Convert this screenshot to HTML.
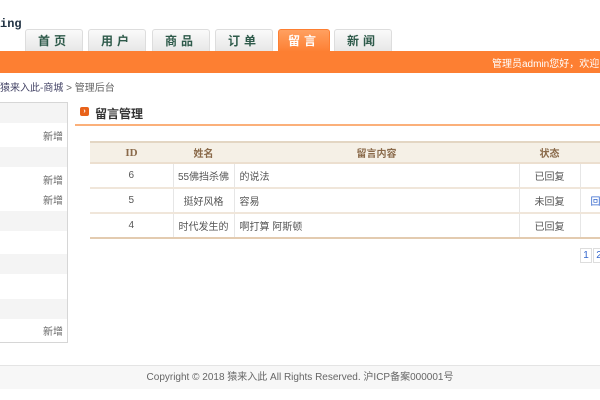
<!DOCTYPE html>
<html><head><meta charset="utf-8"><style>
*{margin:0;padding:0;box-sizing:border-box}
body{width:600px;height:400px;overflow:hidden;background:#fff;font-family:"Liberation Sans","Noto Sans CJK SC",sans-serif;font-size:10px;color:#555;position:relative}
.a{position:absolute}
.logo{left:0;top:17px;font:bold 12px "Liberation Mono",monospace;color:#234;}
.tab{top:29px;height:23px;width:58px;border:1px solid #ddd;border-bottom:none;border-radius:3px 3px 0 0;background:linear-gradient(#fafafa,#e6e6e6);text-align:center;line-height:23px;font-size:12px;font-weight:bold;color:#2e5a4a;letter-spacing:4px}
.tab.on{background:linear-gradient(#ffa060,#fd7f32);color:#fff;border-color:#fd7f32}
.bar{left:0;top:51px;width:600px;height:22px;background:#fd7f32}
.side{left:-2px;top:102px;width:70px;height:241px;border:1px solid #d6d6d6}
.g{position:absolute;left:0;width:68px;background:#f4f4f4}
.xz{position:absolute;right:4px;font-size:10px;color:#666}
table{border-collapse:collapse;position:absolute;left:90px;top:141px;width:520px;table-layout:fixed}
th{height:21px;background:#f5f0e6;border-top:2px solid #e3d6c3;border-bottom:2px solid #ecdfcf;font-weight:bold;color:#8a6a4a;font-size:10px}
td{height:25px;border-bottom:2px solid #f0e6da;text-align:center;font-size:10px;color:#555;white-space:nowrap;overflow:hidden;padding:0}
td+td{border-left:1px solid #e6e6e6}
tr:last-child td{border-bottom:2px solid #e3cbb0}
</style></head><body>
<div class="a logo">ing</div>
<div class="a tab" style="left:25px">首页</div>
<div class="a tab" style="left:88px">用户</div>
<div class="a tab" style="left:152px">商品</div>
<div class="a tab" style="left:215px">订单</div>
<div class="a tab on" style="left:278px;width:52px">留言</div>
<div class="a tab" style="left:334px">新闻</div>
<div class="a bar"></div>
<div class="a" style="left:492px;top:55px;color:#fff;font-size:10px;white-space:nowrap">管理员admin您好，欢迎回</div>
<div class="a" style="left:0;top:79px;font-size:10px;color:#666;white-space:nowrap"><span style="color:#446">猿来入此-商城</span> &gt; 管理后台</div>
<div class="a side">
<div class="g" style="top:0;height:20px"></div>
<div class="xz" style="top:25px">新增</div>
<div class="g" style="top:44px;height:20px"></div>
<div class="xz" style="top:69px">新增</div>
<div class="xz" style="top:89px">新增</div>
<div class="g" style="top:108px;height:20px"></div>
<div class="g" style="top:151px;height:20px"></div>
<div class="g" style="top:196px;height:20px"></div>
<div class="xz" style="top:220px">新增</div>
</div>
<div class="a" style="left:80px;top:107px;width:9px;height:9px;border-radius:2px;background:#e8621a;color:#fff;font-size:7px;line-height:9px;text-align:center;font-weight:bold">›</div>
<div class="a" style="left:95px;top:105px;font-size:12px;font-weight:bold;color:#333">留言管理</div>
<div class="a" style="left:75px;top:124px;width:525px;height:2px;background:#fbb07a"></div>
<table>
<colgroup><col style="width:83px"><col style="width:61px"><col style="width:285px"><col style="width:61px"><col style="width:30px"></colgroup>
<tr><th style="font-family:'Liberation Serif',serif;font-size:11px">ID</th><th>姓名</th><th>留言内容</th><th>状态</th><th></th></tr>
<tr><td>6</td><td>55佛挡杀佛</td><td style="text-align:left;padding-left:5px">的说法</td><td>已回复</td><td></td></tr>
<tr><td>5</td><td>挺好风格</td><td style="text-align:left;padding-left:5px">容易</td><td>未回复</td><td style="text-align:left;padding-left:10px;color:#36c">回复</td></tr>
<tr><td>4</td><td>时代发生的</td><td style="text-align:left;padding-left:5px">啊打算 阿斯顿</td><td>已回复</td><td></td></tr>
</table>
<div class="a" style="left:580px;top:248px;width:12px;height:15px;border:1px solid #ddd;text-align:center;line-height:13px;color:#36c">1</div>
<div class="a" style="left:593px;top:248px;width:12px;height:15px;border:1px solid #ddd;text-align:center;line-height:13px;color:#36c">2</div>
<div class="a" style="left:0;top:365px;width:600px;height:24px;background:#f7f7f7;border-top:1px solid #e4e4e4;text-align:center;line-height:23px;font-size:10px;color:#666">Copyright © 2018 猿来入此 All Rights Reserved. 沪ICP备案000001号</div>
</body></html>
